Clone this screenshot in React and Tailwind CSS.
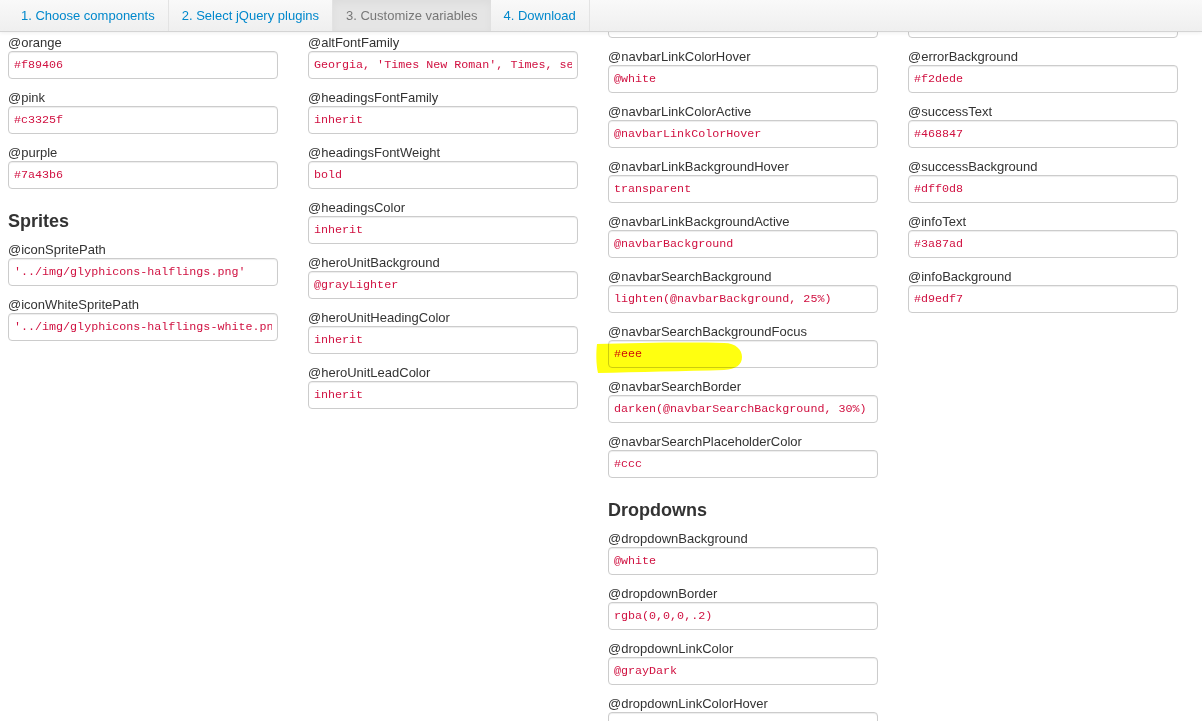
import React from "react";

const col1 = [
  { t: "field", l: "@yellow", v: "#ffc40d" },
  { t: "field", l: "@orange", v: "#f89406" },
  { t: "field", l: "@pink", v: "#c3325f" },
  { t: "field", l: "@purple", v: "#7a43b6" },
  { t: "head", l: "Sprites" },
  { t: "field", l: "@iconSpritePath", v: "'../img/glyphicons-halflings.png'" },
  { t: "field", l: "@iconWhiteSpritePath", v: "'../img/glyphicons-halflings-white.png'" },
];

const col2 = [
  { t: "field", l: "@monoFontFamily", v: 'Monaco, Menlo, Consolas, "Courier New", monospace' },
  { t: "field", l: "@altFontFamily", v: "Georgia, 'Times New Roman', Times, serif" },
  { t: "field", l: "@headingsFontFamily", v: "inherit" },
  { t: "field", l: "@headingsFontWeight", v: "bold" },
  { t: "field", l: "@headingsColor", v: "inherit" },
  { t: "field", l: "@heroUnitBackground", v: "@grayLighter" },
  { t: "field", l: "@heroUnitHeadingColor", v: "inherit" },
  { t: "field", l: "@heroUnitLeadColor", v: "inherit" },
];

const col3 = [
  { t: "field", l: "@navbarLinkColor", v: "@gray" },
  { t: "field", l: "@navbarLinkColorHover", v: "@white" },
  { t: "field", l: "@navbarLinkColorActive", v: "@navbarLinkColorHover" },
  { t: "field", l: "@navbarLinkBackgroundHover", v: "transparent" },
  { t: "field", l: "@navbarLinkBackgroundActive", v: "@navbarBackground" },
  { t: "field", l: "@navbarSearchBackground", v: "lighten(@navbarBackground, 25%)" },
  { t: "field", l: "@navbarSearchBackgroundFocus", v: "#eee", hl: true },
  { t: "field", l: "@navbarSearchBorder", v: "darken(@navbarSearchBackground, 30%)" },
  { t: "field", l: "@navbarSearchPlaceholderColor", v: "#ccc" },
  { t: "head", l: "Dropdowns" },
  { t: "field", l: "@dropdownBackground", v: "@white" },
  { t: "field", l: "@dropdownBorder", v: "rgba(0,0,0,.2)" },
  { t: "field", l: "@dropdownLinkColor", v: "@grayDark" },
  { t: "field", l: "@dropdownLinkColorHover", v: "@white" },
];

const col4 = [
  { t: "field", l: "@errorText", v: "#b94a48" },
  { t: "field", l: "@errorBackground", v: "#f2dede" },
  { t: "field", l: "@successText", v: "#468847" },
  { t: "field", l: "@successBackground", v: "#dff0d8" },
  { t: "field", l: "@infoText", v: "#3a87ad" },
  { t: "field", l: "@infoBackground", v: "#d9edf7" },
];

function Field({ l, v, hl }) {
  return (
    <div className="flex flex-col mb-[9px]">
      <label className="block h-[18px] leading-[20px] text-[13px] text-[#333]">{l}</label>
      <div className="relative">
        <input
          readOnly
          value={v}
          className="block w-[270px] h-[28px] border border-[#cccccc] rounded-[4px] bg-white pl-[5px] pr-[5px] text-[11.7px] text-[#d01040] shadow-[inset_0_1px_1px_rgba(0,0,0,0.075)] outline-none"
          style={{ fontFamily: '"Liberation Mono", "Courier New", monospace' }}
        />
        {hl && (
          <svg
            className="absolute left-[-12px] top-[2px] pointer-events-none mix-blend-multiply"
            width="150"
            height="34"
            viewBox="0 0 150 34"
          >
            <path
              d="M1 2 C 40 1, 90 0, 128 1 C 140 1, 146 8, 146 15 C 146 23, 140 27, 128 28 C 90 29, 40 30, 2 31 C 0 22, 0 10, 1 2 Z"
              fill="#ffff10"
            />
          </svg>
        )}
      </div>
    </div>
  );
}

function Head({ l }) {
  return (
    <h3 className="mt-[14px] mb-[8px] h-[20px] leading-[18px] text-[18px] font-bold text-[#333]">{l}</h3>
  );
}

function Column({ items, className }) {
  return (
    <div className={"flex flex-col " + (className || "")}>
      {items.map((it, i) =>
        it.t === "head" ? <Head key={i} l={it.l} /> : <Field key={i} {...it} />
      )}
    </div>
  );
}

export default function App() {
  const tabs = [
    { n: "1. Choose components" },
    { n: "2. Select jQuery plugins" },
    { n: "3. Customize variables", active: true },
    { n: "4. Download" },
  ];
  return (
    <div
      className="relative w-[1202px] h-[721px] overflow-hidden bg-white"
      style={{ fontFamily: '"Liberation Sans", Arial, sans-serif' }}
    >
      <div className="mt-[-22px] px-[8px] grid grid-cols-[repeat(4,270px)] gap-x-[30px] items-start">
        <Column items={col1} />
        <Column items={col2} />
        <Column items={col3} className="pt-[14px]" />
        <Column items={col4} className="pt-[14px]" />
      </div>

      <div className="absolute top-0 left-0 right-0 h-[32px] bg-linear-to-b from-[#f9f9f9] to-[#efefef] border-b border-[#d4d4d4] shadow-[0_1px_4px_rgba(0,0,0,0.065)] flex pl-[8px]">
        {tabs.map((t, i) => (
          <div
            key={i}
            className={
              "h-[31px] flex items-center px-[13px] text-[13px] " +
              (t.active
                ? "bg-[#e5e5e5] text-[#777] shadow-[inset_0_3px_8px_rgba(0,0,0,0.04)]"
                : "text-[#0088cc] border-r border-[#e3e3e3]")
            }
          >
            {t.n}
          </div>
        ))}
      </div>
    </div>
  );
}
